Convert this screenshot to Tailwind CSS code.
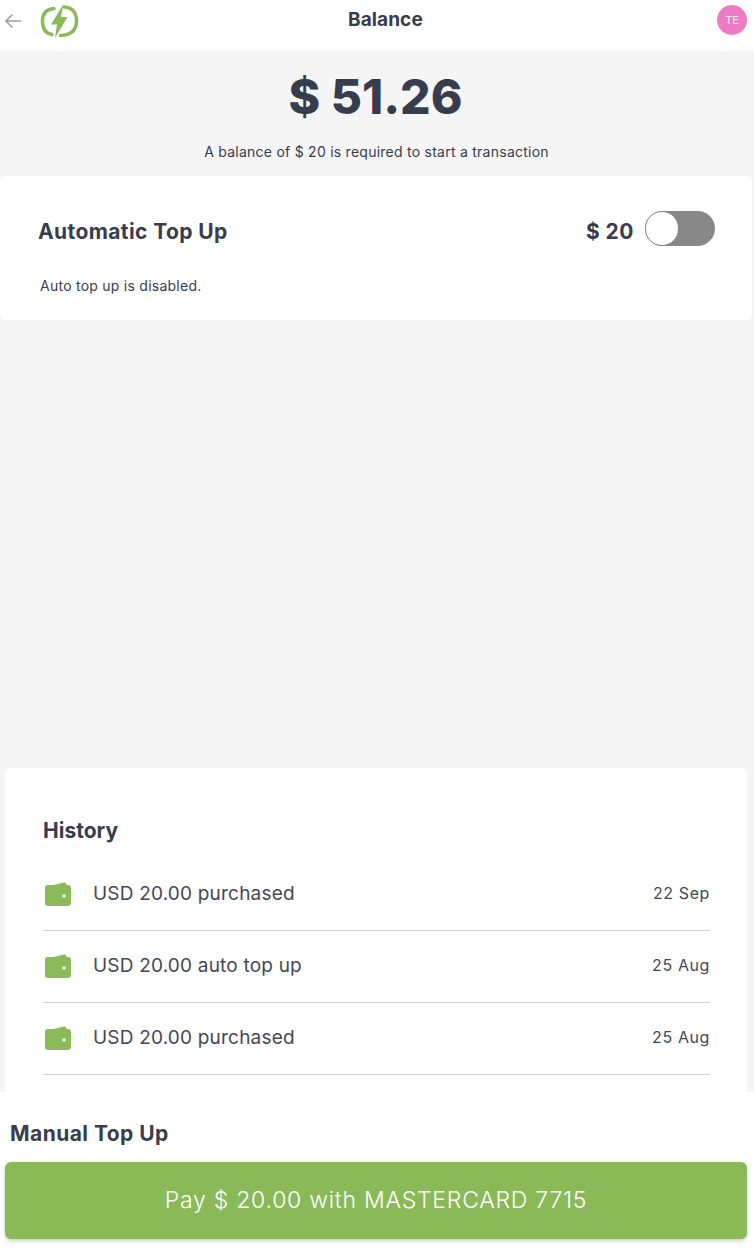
<!doctype html>
<html lang="en">
<head>
  <meta charset="UTF-8">
  <meta name="viewport" content="width=device-width, initial-scale=1.0">
  <title>Balance</title>
  <script src="https://cdn.jsdelivr.net/npm/@tailwindcss/browser@4"></script>
</head>
<body class="bg-[#f5f5f5] font-['Inter',sans-serif] text-[#383d4e]">
<div class="h-[1250px] flex flex-col overflow-hidden">

  <!-- header -->
  <header class="h-[51px] shrink-0 bg-white flex items-center relative">
    <svg class="ml-[4px] w-[18px] h-[16px] mb-[10px]" viewBox="0 0 18 16" fill="none" stroke="#9a9dab" stroke-width="1.5"><path d="M17 8H2M8.500 1.500 2 8l6.500 6.500"/></svg>
    <svg class="ml-[18px] mb-[10px] w-[40px] h-[36px]" viewBox="0 0 40 36" fill="none">
      <path d="M14 5.500C6 6 2.500 10.500 2.500 18C2.500 26 6 30.500 12 31.500" stroke="#8abb58" stroke-width="3.500" stroke-linecap="round"/>
      <path d="M24.500 4C32.500 4.500 36.500 10 36.500 18C36.500 27 31 32 20.500 32.500" stroke="#8abb58" stroke-width="3.500" stroke-linecap="round"/>
      <path d="M23.500 1 11 21.500H17L15 35 27.500 14H21Z" fill="#8abb58"/>
    </svg>
    <h1 class="absolute left-[348px] top-[8px] text-[19px] leading-[24px] font-bold tracking-[0.1px]">Balance</h1>
    <div class="absolute left-[717px] top-[5px] w-[30px] h-[30px] rounded-full bg-[#ee7cc4] text-white/90 text-[11px] flex items-center justify-center">TE</div>
  </header>

  <!-- balance -->
  <section class="h-[125px] shrink-0 flex flex-col items-center">
    <div class="mt-[16px] mr-[3px] text-[48px] leading-[60px] font-extrabold">$ 51.26</div>
    <p class="mt-[16px] mr-[1px] text-[14px] leading-[18px] tracking-[0.25px]">A balance of $ 20 is required to start a transaction</p>
  </section>

  <!-- auto top up -->
  <section class="h-[144px] shrink-0 w-[752px] bg-white rounded-md pl-[38px] pr-[37px] pt-[35px]">
    <div class="flex items-center justify-between h-[35px]">
      <h2 class="text-[21px] font-bold tracking-[0.4px] mt-[6px]">Automatic Top Up</h2>
      <div class="flex items-center gap-[11px]">
        <span class="text-[21px] font-bold tracking-[0.5px] mt-[6px]">$ 20</span>
        <div class="w-[70px] h-[35px] rounded-full bg-[#888888]">
          <div class="w-[34px] h-[35px] rounded-full bg-white border border-[#888888]"></div>
        </div>
      </div>
    </div>
    <p class="mt-[31px] ml-[2px] text-[14px] leading-[18px] tracking-[0.25px]">Auto top up is disabled.</p>
  </section>

  <div class="flex-1"></div>

  <!-- history -->
  <section class="h-[324px] shrink-0 mx-[5px] w-[742px] bg-white rounded-t-md pl-[38px] pr-[37px] pt-[50px]">
    <h2 class="text-[21px] leading-[26px] font-bold">History</h2>
    <ul class="mt-[15px]">
      <li class="h-[72px] flex items-center border-b border-[#d4d4d4]">
        <svg class="w-[26px] h-[24px] ml-[2px] mb-[2px] shrink-0" viewBox="0 0 26 24"><path d="M4 4 19 .5c1.500-.2 2.500.5 2.500 2V5H4Z" fill="#8abb58"/><rect y="3" width="26" height="21" rx="3" fill="#8abb58"/><circle cx="19" cy="14" r="1.700" fill="#fff"/></svg>
        <span class="ml-[22px] text-[19px] tracking-[0.2px] text-[#444857]">USD 20.00 purchased</span>
        <span class="ml-auto mb-[3px] text-[16px] tracking-[0.6px] text-[#444857]">22 Sep</span>
      </li>
      <li class="h-[72px] flex items-center border-b border-[#d4d4d4]">
        <svg class="w-[26px] h-[24px] ml-[2px] mb-[2px] shrink-0" viewBox="0 0 26 24"><path d="M4 4 19 .5c1.500-.2 2.500.5 2.500 2V5H4Z" fill="#8abb58"/><rect y="3" width="26" height="21" rx="3" fill="#8abb58"/><circle cx="19" cy="14" r="1.700" fill="#fff"/></svg>
        <span class="ml-[22px] text-[19px] tracking-[0.2px] text-[#444857]">USD 20.00 auto top up</span>
        <span class="ml-auto mb-[3px] text-[16px] tracking-[0.6px] text-[#444857]">25 Aug</span>
      </li>
      <li class="h-[72px] flex items-center border-b border-[#d4d4d4]">
        <svg class="w-[26px] h-[24px] ml-[2px] mb-[2px] shrink-0" viewBox="0 0 26 24"><path d="M4 4 19 .5c1.500-.2 2.500.5 2.500 2V5H4Z" fill="#8abb58"/><rect y="3" width="26" height="21" rx="3" fill="#8abb58"/><circle cx="19" cy="14" r="1.700" fill="#fff"/></svg>
        <span class="ml-[22px] text-[19px] tracking-[0.2px] text-[#444857]">USD 20.00 purchased</span>
        <span class="ml-auto mb-[3px] text-[16px] tracking-[0.6px] text-[#444857]">25 Aug</span>
      </li>
    </ul>
  </section>

  <!-- manual top up -->
  <footer class="h-[158px] shrink-0 bg-white px-[5px] pt-[29px]">
    <h2 class="ml-[5px] text-[21px] leading-[26px] font-bold tracking-[0.45px]">Manual Top Up</h2>
    <button class="mt-[15px] w-[742px] h-[77px] rounded-md bg-[#8aba58] text-white text-[23px] font-light tracking-[0.75px] shadow-[0_2px_4px_rgba(0,0,0,0.2)]">Pay $ 20.00 with MASTERCARD 7715</button>
  </footer>

</div>
</body>
</html>
